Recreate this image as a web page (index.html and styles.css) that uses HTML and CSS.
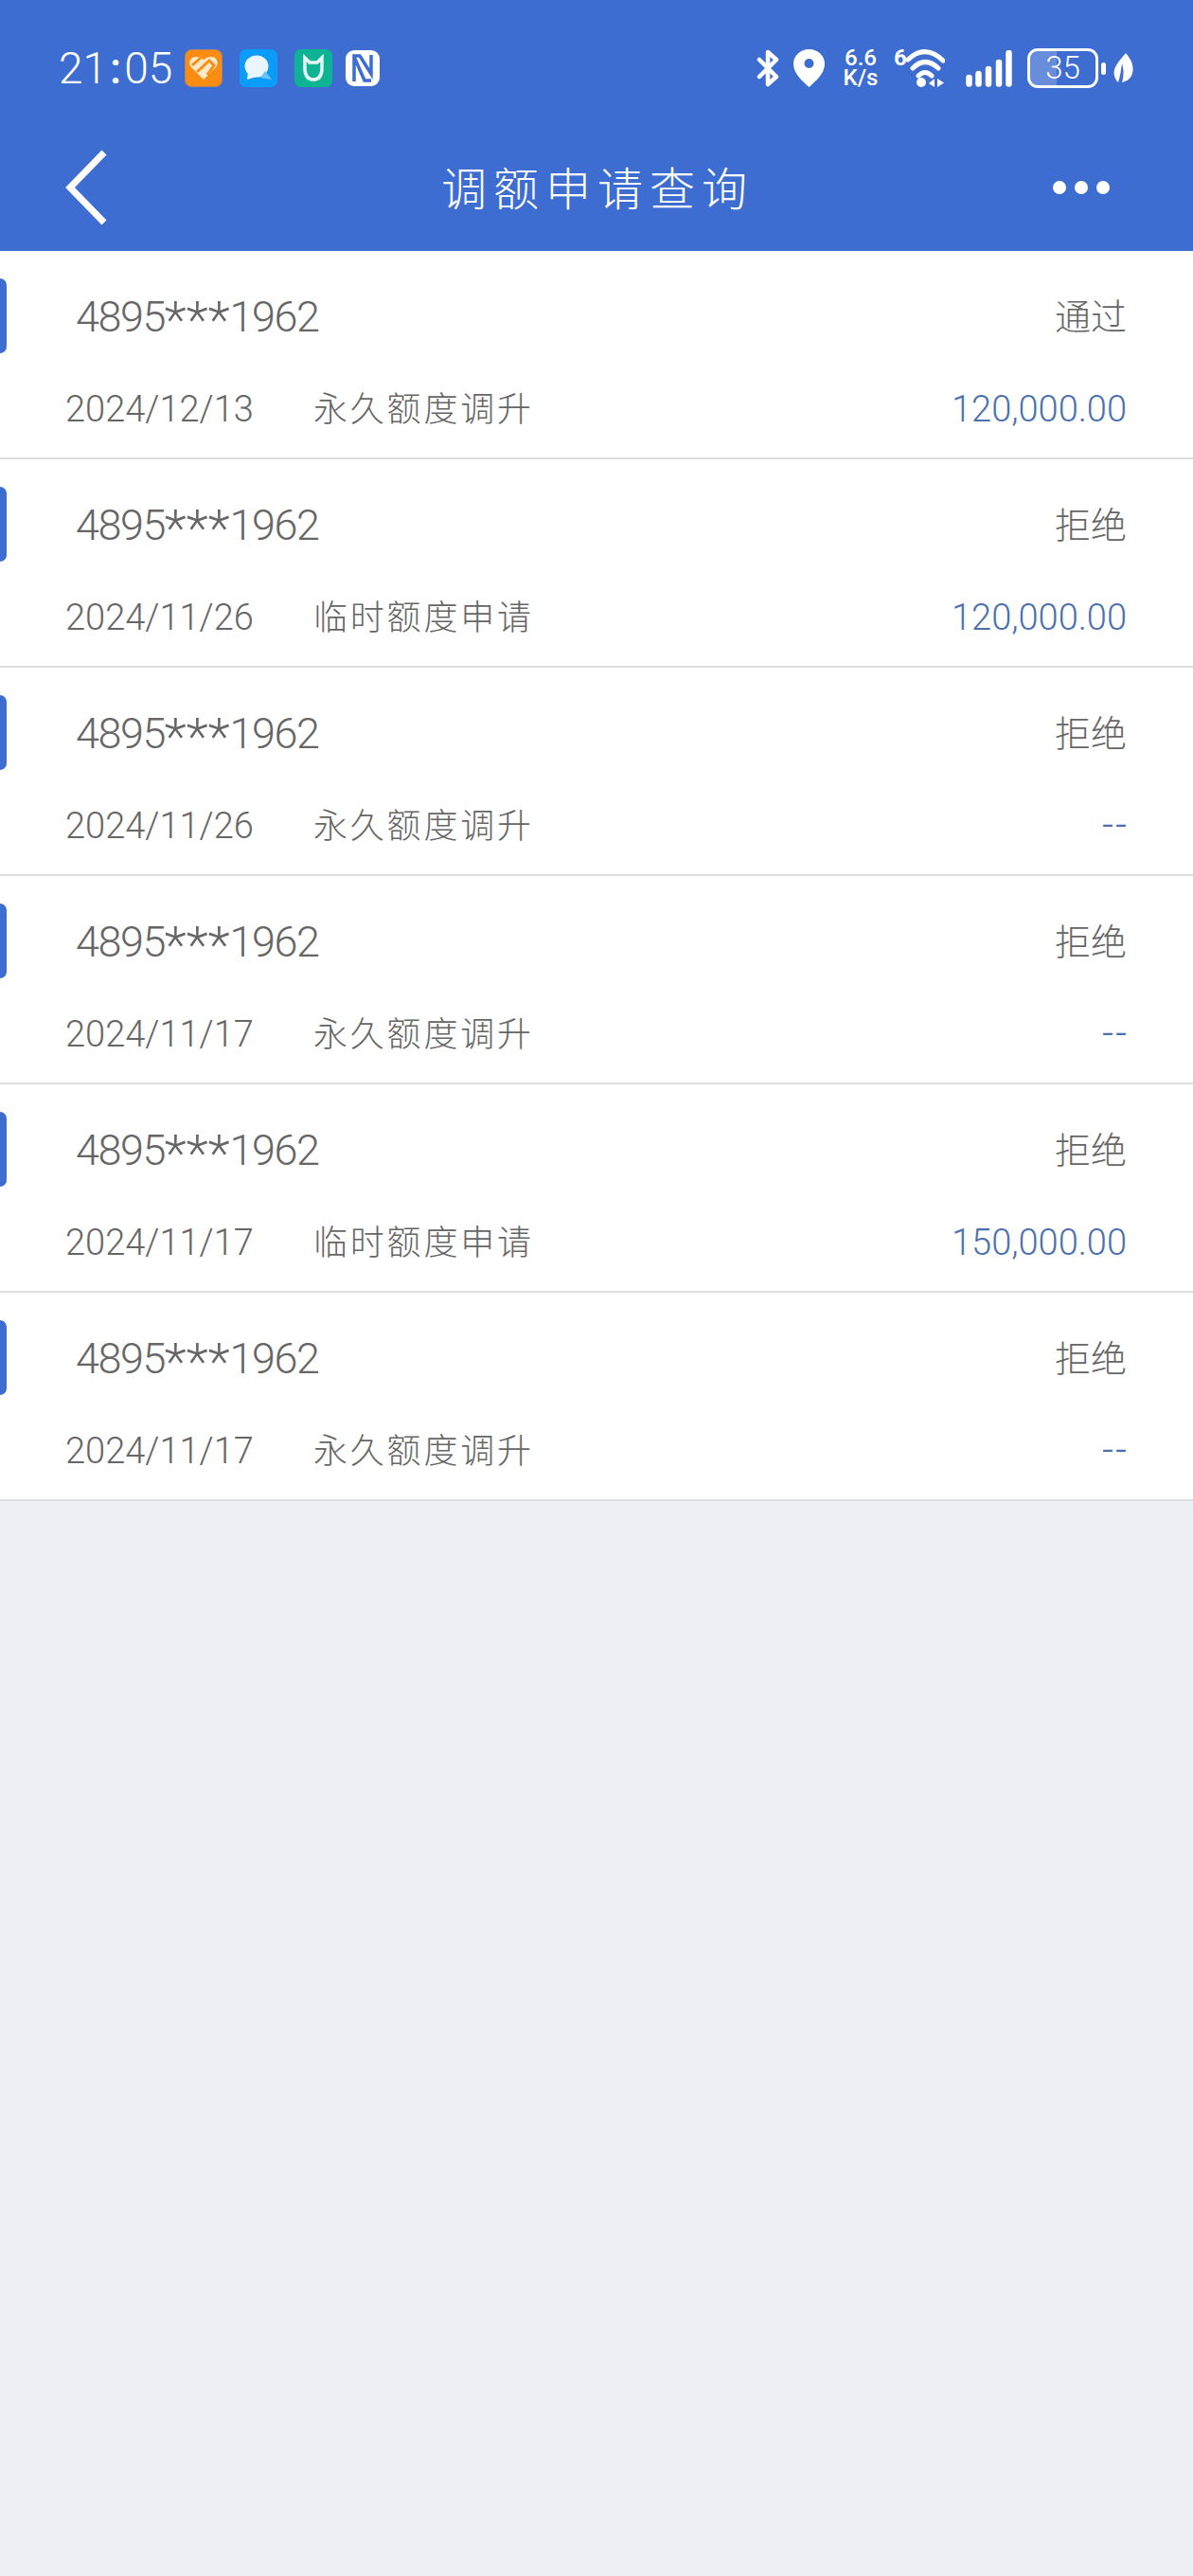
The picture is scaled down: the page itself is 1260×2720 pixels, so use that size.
FILE: index.html
```html
<!DOCTYPE html>
<html lang="zh-CN">

<head>
    <meta charset="UTF-8">
    <meta name="viewport" content="width=device-width, initial-scale=1.0">
    <title>调额申请查询</title>
    <link rel="stylesheet" href="styles.css">
</head>

<body>
    <div class="header">
        <div class="status">
            <div class="status-left">
                <span class="time">21<span class="colon">:</span>05</span>
                <svg class="app" width="40" height="40" viewBox="0 0 40 40">
                    <rect x="0.500" y="0.500" width="39" height="39" rx="7" fill="#fb8c12" stroke="#b08466" />
                    <path d="M20 32 L7 19 Q3 13 8 9 Q14 6 20 11 Q26 6 32 9 Q37 13 33 19 Z" fill="#fde8c8" />
                    <path d="M8 17 L17 9 M13 24 L26 12 L31 17 L24 27" fill="none" stroke="#fb8c12" stroke-width="3" />
                </svg>
                <svg class="app app-gap" width="40" height="40" viewBox="0 0 40 40">
                    <rect width="40" height="40" rx="7" fill="#0a9cf8" />
                    <ellipse cx="18" cy="18" rx="12.500" ry="11.500" fill="#eaf6fd" />
                    <path d="M9 24 L8 32 L18 29 Z" fill="#eaf6fd" />
                    <path d="M27 23 L34 32 L22 30 Z" fill="#6cc3fb" />
                </svg>
                <svg class="app app-gap" width="40" height="40" viewBox="0 0 40 40">
                    <rect width="40" height="40" rx="7" fill="#0eb394" />
                    <path d="M11 9 L11 22 Q12 32 20 32 Q28 32 29 22 L29 9 L24 14 L16 14 Z" fill="none" stroke="#e6f8f4" stroke-width="3.500" />
                    <path d="M14 21 Q20 27 26 21" fill="none" stroke="#0eb394" stroke-width="3" />
                </svg>
                <svg class="app app-nfc" width="36" height="38" viewBox="0 0 36 38">
                    <rect width="36" height="38" rx="9" fill="#fff" />
                    <path d="M9 33 V6 H15 L27 25 V5 M9 7 L20 32 H27" fill="none" stroke="#3d6dd1" stroke-width="3.500" />
                </svg>
            </div>
            <div class="status-right">
                <svg width="24" height="40" viewBox="0 0 24 40">
                    <path d="M3 11 L21 29 L12 37 L12 3 L21 11 L3 29" fill="none" stroke="#fff" stroke-width="4.500" stroke-linejoin="round" stroke-linecap="round" />
                </svg>
                <svg class="pin" width="33" height="40" viewBox="0 0 33 40">
                    <path fill-rule="evenodd" d="M16.500 40 C10 34 0 26 0 15.500 A16.500 15.500 0 0 1 33 15.500 C33 26 23 34 16.500 40 Z M16.500 10 A5 5 0 1 0 16.500 20 A5 5 0 1 0 16.500 10 Z" fill="#fff" />
                </svg>
                <div class="speed">6.6<br>K/s</div>
                <span class="wifi-six">6</span>
                <svg width="43" height="40" viewBox="11 0 43 40">
                    <path d="M15 11 Q33 -6 52 12 M20 20 Q33 7 47 20 M26 28 Q33 21 40 28" fill="none" stroke="#fff" stroke-width="5" stroke-linecap="round" />
                    <circle cx="29" cy="35" r="5" fill="#fff" />
                    <path d="M43 31 L43 40 L37 36 Z M46 31 L46 40 L53 35.500 Z" fill="#fff" />
                </svg>
                <svg class="signal" width="49" height="39" viewBox="0 0 49 39">
                    <path d="M3.500 29 V35.500 M13.500 25 V35.500 M24 20 V35.500 M35 13 V35.500 M45.500 3 V35.500" fill="none" stroke="#fff" stroke-width="6.500" stroke-linecap="round" />
                </svg>
                <div class="battery">
                    <span class="battery-fill"></span>
                    <span class="battery-num">35</span>
                </div>
                <span class="battery-nub"></span>
                <svg class="leaf" width="21" height="32" viewBox="0 0 21 32">
                    <path d="M13 0 C19 7 23 15 19 24 C17 28 13 30 9 31 C11 24 11 18 9 11 C8 18 7 25 5 31 C1 27 -1 21 2 15 C4 10 9 5 13 0 Z" fill="#fff" />
                </svg>
            </div>
        </div>
        <div class="nav">
            <svg class="back" width="46" height="80" viewBox="0 0 46 80">
                <path d="M42 3 L6 40 L42 77" fill="none" stroke="#fff" stroke-width="7" />
            </svg>
            <div class="title">调额申请查询</div>
            <div class="more"><i></i><i></i><i></i></div>
        </div>
    </div>

    <div class="list">
        <div class="item">
            <span class="tab"></span>
            <div class="line-top"><span class="card">4895<span class="stars">***</span>1962</span><span class="state">通过</span></div>
            <div class="line-bottom"><span class="date">2024/12/13</span><span class="kind">永久额度调升</span><span class="amount">120,000.00</span></div>
        </div>
        <div class="item">
            <span class="tab"></span>
            <div class="line-top"><span class="card">4895<span class="stars">***</span>1962</span><span class="state">拒绝</span></div>
            <div class="line-bottom"><span class="date">2024/11/26</span><span class="kind">临时额度申请</span><span class="amount">120,000.00</span></div>
        </div>
        <div class="item">
            <span class="tab"></span>
            <div class="line-top"><span class="card">4895<span class="stars">***</span>1962</span><span class="state">拒绝</span></div>
            <div class="line-bottom"><span class="date">2024/11/26</span><span class="kind">永久额度调升</span><span class="amount amount-none">--</span></div>
        </div>
        <div class="item">
            <span class="tab"></span>
            <div class="line-top"><span class="card">4895<span class="stars">***</span>1962</span><span class="state">拒绝</span></div>
            <div class="line-bottom"><span class="date">2024/11/17</span><span class="kind">永久额度调升</span><span class="amount amount-none">--</span></div>
        </div>
        <div class="item">
            <span class="tab"></span>
            <div class="line-top"><span class="card">4895<span class="stars">***</span>1962</span><span class="state">拒绝</span></div>
            <div class="line-bottom"><span class="date">2024/11/17</span><span class="kind">临时额度申请</span><span class="amount">150,000.00</span></div>
        </div>
        <div class="item">
            <span class="tab"></span>
            <div class="line-top"><span class="card">4895<span class="stars">***</span>1962</span><span class="state">拒绝</span></div>
            <div class="line-bottom"><span class="date">2024/11/17</span><span class="kind">永久额度调升</span><span class="amount amount-none">--</span></div>
        </div>
    </div>
</body>

</html>
```

FILE: styles.css
```css
* {
    padding: 0;
    margin: 0;
    box-sizing: border-box;
}

html,
body {
    height: 100%;
}

body {
    background-color: #edf0f5;
    font-family: Roboto, "Noto Sans CJK SC", sans-serif;
    color: #666;
}

.header {
    height: 265px;
    background-color: #3d6dd1;
    color: #fff;
}

.status {
    height: 130px;
    padding: 52px 63px 0 62px;
    display: flex;
    justify-content: space-between;
    align-items: flex-start;
}

.status-left,
.status-right {
    display: flex;
    align-items: center;
    height: 40px;
}

.time {
    width: 133px;
    font-size: 46px;
    font-weight: 300;
}

.colon {
    margin: 0 3px;
    font-weight: 500;
}

.app-gap {
    margin-left: 18px;
}

.app-nfc {
    margin-left: 14px;
}

.pin {
    margin-left: 15px;
}

.speed {
    width: 38px;
    margin-left: 19px;
    text-align: center;
    font-size: 24px;
    line-height: 21px;
    font-weight: 500;
}

.wifi-six {
    width: 11px;
    margin-left: 16px;
    align-self: flex-start;
    font-size: 24px;
    line-height: 18px;
    font-weight: 700;
}

.signal {
    margin-left: 22px;
}

.battery {
    width: 75px;
    height: 42px;
    margin-left: 16px;
    border: 3.500px solid #fff;
    border-radius: 11px;
    position: relative;
    display: flex;
    justify-content: center;
    align-items: center;
    overflow: hidden;
}

.battery-fill {
    position: absolute;
    left: 0;
    top: 0;
    bottom: 0;
    width: 40%;
    background-color: rgba(255, 255, 255, 0.22);
}

.battery-num {
    position: relative;
    font-size: 33px;
    line-height: 34px;
    font-weight: 300;
}

.battery-nub {
    width: 5px;
    height: 13px;
    margin-left: 3px;
    background-color: #fff;
    border-radius: 3px;
}

.leaf {
    margin-left: 8px;
}

.nav {
    height: 135px;
    padding: 0 88px 0 68px;
    display: flex;
    justify-content: space-between;
    align-items: center;
    position: relative;
}

.title {
    position: absolute;
    left: 2px;
    right: 0;
    top: 31px;
    text-align: center;
    font-size: 48px;
    letter-spacing: 7px;
    font-weight: 300;
}

.more {
    display: flex;
    gap: 9px;
}

.more i {
    display: block;
    width: 14px;
    height: 14px;
    border-radius: 50%;
    background-color: #fff;
}

.list {
    background-color: #fff;
}

.item {
    height: 220px;
    padding: 0 70px 0 69px;
    border-bottom: 2px solid #dcdee0;
    position: relative;
}

.tab {
    position: absolute;
    left: 0;
    top: 29px;
    width: 7px;
    height: 79px;
    background-color: #3d6dd1;
    border-radius: 0 10px 10px 0;
}

.line-top {
    height: 138px;
    padding-top: 43px;
    display: flex;
    justify-content: space-between;
    align-items: flex-start;
}

.card {
    margin-left: 11px;
    font-size: 45px;
    line-height: 54px;
    font-weight: 300;
    letter-spacing: -1.500px;
}

.stars {
    font-size: 54px;
    line-height: 0;
    vertical-align: -6px;
    letter-spacing: 0;
}

.state {
    font-size: 38px;
    line-height: 50px;
    font-weight: 300;
    margin-top: 2px;
}

.line-bottom {
    display: flex;
    align-items: baseline;
    height: 50px;
}

.date {
    width: 262px;
    font-size: 38px;
    font-weight: 300;
}

.kind {
    font-size: 36px;
    letter-spacing: 2.800px;
    font-weight: 300;
}

.amount {
    margin-left: auto;
    font-size: 38px;
    font-weight: 300;
    color: #4a70ae;
}

.amount-none {
    margin-right: -2px;
    letter-spacing: 2px;
    font-size: 42px;
}
```
